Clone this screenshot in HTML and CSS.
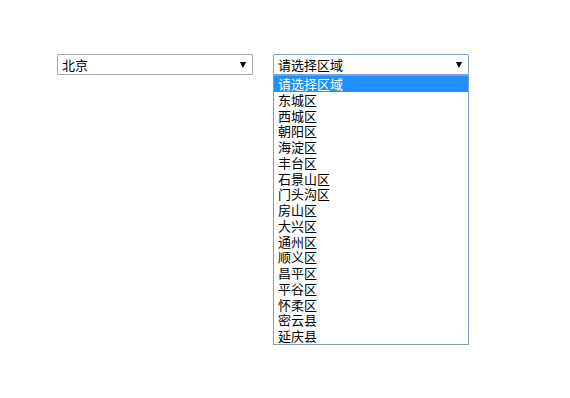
FILE: index.html
```html
<!DOCTYPE html>
<html lang="zh-CN">
<head>
  <meta charset="UTF-8" />
  <title>城市区域选择</title>
  <link rel="stylesheet" href="styles.css">
</head>
<body>

  <div class="pickers">
    <div class="select">
      <span class="select-text">北京</span>
      <span class="arrow"></span>
    </div>

    <div class="select-wrap">
      <div class="select focus">
        <span class="select-text">请选择区域</span>
        <span class="arrow"></span>
      </div>
      <div class="dropdown">
        <div class="option active">请选择区域</div>
        <div class="option">东城区</div>
        <div class="option">西城区</div>
        <div class="option">朝阳区</div>
        <div class="option">海淀区</div>
        <div class="option">丰台区</div>
        <div class="option">石景山区</div>
        <div class="option">门头沟区</div>
        <div class="option">房山区</div>
        <div class="option">大兴区</div>
        <div class="option">通州区</div>
        <div class="option">顺义区</div>
        <div class="option">昌平区</div>
        <div class="option">平谷区</div>
        <div class="option">怀柔区</div>
        <div class="option">密云县</div>
        <div class="option">延庆县</div>
      </div>
    </div>
  </div>

</body>
</html>
```

FILE: styles.css
```css
* {
  box-sizing: border-box;
}

body {
  margin: 0;
  background: #fff;
  font-family: "Noto Sans CJK SC", "DejaVu Sans", sans-serif;
  font-size: 13px;
  color: #000;
}

.pickers {
  display: flex;
  align-items: flex-start;
  gap: 20px;
  padding: 54px 0 0 57px;
}

.select-wrap {
  display: flex;
  flex-direction: column;
  width: 196px;
}

.select {
  width: 196px;
  height: 21px;
  border: 1px solid #a6a6a6;
  border-radius: 1px;
  display: flex;
  align-items: center;
  justify-content: space-between;
  padding: 0 5px 0 4px;
  background: #fff;
}

.select.focus {
  border-color: #7ba3da;
}

.select-text {
  line-height: 19px;
}

.arrow {
  width: 0;
  height: 0;
  border-left: 3.5px solid transparent;
  border-right: 3.5px solid transparent;
  border-top: 6px solid #000;
  margin-right: 1px;
}

.dropdown {
  width: 196px;
  border: 1px solid #7f9dc4;
  background: #fff;
}

.option {
  height: 15.75px;
  line-height: 15.75px;
  padding-left: 4px;
  white-space: nowrap;
}

.option.active {
  background: #1e90ff;
  color: #fff;
}
```
